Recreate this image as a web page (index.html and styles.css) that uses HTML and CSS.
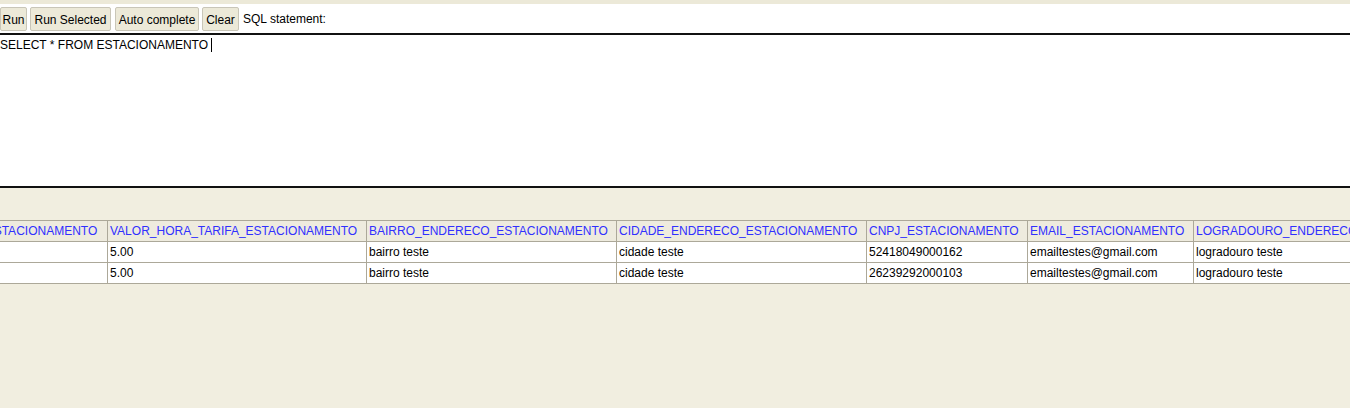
FILE: index.html
```html
<!DOCTYPE html>
<html>
<head>
<meta charset="utf-8">
<link rel="stylesheet" href="styles.css">
</head>
<body>
<div class="top-strip"></div>
<div class="toolbar">
  <button class="btn btn-run">Run</button>
  <button class="btn btn-sel">Run Selected</button>
  <button class="btn btn-auto">Auto complete</button>
  <button class="btn btn-clear">Clear</button>
  <span class="label">SQL statement:</span>
</div>
<div class="editor">
  <span class="sql">SELECT * FROM ESTACIONAMENTO</span><span class="caret"></span>
</div>
<div class="results">
  <div class="scroller">
    <table class="grid">
      <colgroup>
        <col class="c1"><col class="c2"><col class="c3"><col class="c4"><col class="c5"><col class="c6"><col class="c7">
      </colgroup>
      <thead>
        <tr>
          <th>ID_ESTACIONAMENTO</th>
          <th>VALOR_HORA_TARIFA_ESTACIONAMENTO</th>
          <th>BAIRRO_ENDERECO_ESTACIONAMENTO</th>
          <th>CIDADE_ENDERECO_ESTACIONAMENTO</th>
          <th>CNPJ_ESTACIONAMENTO</th>
          <th>EMAIL_ESTACIONAMENTO</th>
          <th>LOGRADOURO_ENDERECO_ESTACIONAMENTO</th>
        </tr>
      </thead>
      <tbody>
        <tr>
          <td>1</td>
          <td>5.00</td>
          <td>bairro teste</td>
          <td>cidade teste</td>
          <td>52418049000162</td>
          <td>emailtestes@gmail.com</td>
          <td>logradouro teste</td>
        </tr>
        <tr>
          <td>2</td>
          <td>5.00</td>
          <td>bairro teste</td>
          <td>cidade teste</td>
          <td>26239292000103</td>
          <td>emailtestes@gmail.com</td>
          <td>logradouro teste</td>
        </tr>
      </tbody>
    </table>
  </div>
</div>
</body>
</html>
```
FILE: styles.css
```css
html, body {
  margin: 0;
  padding: 0;
}
body {
  width: 1350px;
  height: 408px;
  overflow: hidden;
  background: #f1eee0;
  font-family: "Liberation Sans", Arial, sans-serif;
  font-size: 12px;
  color: #000;
}
.top-strip {
  height: 4px;
  background: #ece9d8;
}
.toolbar {
  background: #fff;
  height: 29px;
  display: flex;
  align-items: flex-start;
  padding-top: 3px;
  box-sizing: border-box;
}
.btn {
  font-family: "Liberation Sans", Arial, sans-serif;
  font-size: 12px;
  color: #000;
  height: 24px;
  background: #ece9d8;
  border: 1px solid #c9c6b8;
  border-radius: 2px;
  padding: 1px 0 0 0;
  margin: 0;
  text-align: center;
  line-height: 22px;
  box-sizing: border-box;
}
.btn-run { width: 27px; margin-right: 3px; }
.btn-sel { width: 81px; margin-right: 4px; }
.btn-auto { width: 84px; margin-right: 3px; }
.btn-clear { width: 37px; margin-right: 4px; }
.label {
  line-height: 25px;
}
.editor {
  background: #fff;
  border-top: 2px solid #111;
  border-bottom: 2px solid #111;
  height: 148px;
  padding-top: 3px;
  box-sizing: content-box;
  line-height: 14px;
}
.sql {
  vertical-align: top;
}
.caret {
  display: inline-block;
  width: 1px;
  height: 14px;
  background: #000;
  margin-left: 3px;
  vertical-align: top;
}
.results {
  padding-top: 32px;
}
.scroller {
  width: 1350px;
  overflow: hidden;
}
.grid {
  border-collapse: collapse;
  table-layout: fixed;
  width: 1563px;
  margin-left: -36px;
}
.c1 { width: 143px; }
.c2 { width: 259px; }
.c3 { width: 250px; }
.c4 { width: 250px; }
.c5 { width: 161px; }
.c6 { width: 166px; }
.c7 { width: 334px; }
.grid th, .grid td {
  border: 1px solid #aca899;
  height: 21px;
  padding: 0 2px;
  text-align: left;
  white-space: nowrap;
  overflow: hidden;
  box-sizing: border-box;
  font-size: 12px;
  line-height: 19px;
}
.grid th {
  font-weight: normal;
  color: #3030ff;
  background: #eeebde;
}
.grid td {
  background: #fff;
  color: #000;
}
```
